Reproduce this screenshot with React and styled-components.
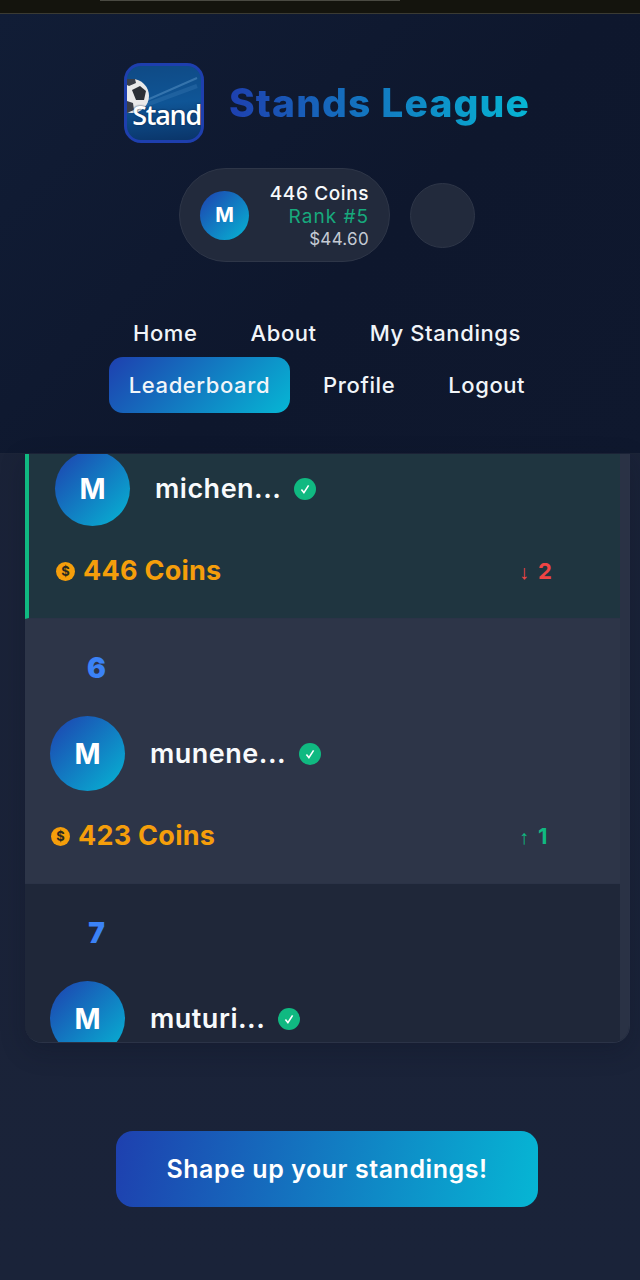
import React from 'react'
import styled, { createGlobalStyle } from 'styled-components'

const GlobalStyle = createGlobalStyle`
  html, body { margin: 0; padding: 0; background: #1a2238; overflow: hidden; }
  * { box-sizing: border-box; }
`

const Viewport = styled.div`
  width: 640px;
  height: 1280px;
  overflow: hidden;
  background: linear-gradient(180deg, #1a2237 0%, #1a2339 100%);
  font-family: Inter, "Open Sans", sans-serif;
  color: #fff;
`
// the page itself is a bit wider than the phone screen, so it gets cut on the right
const Page = styled.div`
  width: 654px;
`
const StatusBar = styled.div`
  height: 14px;
  background: #14140d;
  border-bottom: 1px solid #3b3b33;
  padding-left: 100px;
`
const StatusLine = styled.div`
  width: 300px;
  height: 1px;
  background: #4a4a42;
`
const Header = styled.header`
  height: 440px;
  padding-top: 49px;
  display: flex;
  flex-direction: column;
  align-items: center;
  background: linear-gradient(135deg, #111d36 0%, #0e172d 55%, #0f182e 100%);
  border-bottom: 1px solid #1c2438;
`
const Brand = styled.div`
  display: flex;
  align-items: center;
  gap: 25px;
`
const LogoBox = styled.div`
  position: relative;
  width: 80px;
  height: 80px;
  border: 3px solid #1e3fae;
  border-radius: 17px;
  overflow: hidden;
  background: linear-gradient(175deg, #0f4a85 0%, #0f5596 50%, #0a3468 100%);
`
const LogoArt = styled.svg`
  position: absolute;
  left: 0;
  top: 0;
`
const LogoText = styled.span`
  position: absolute;
  right: 0;
  bottom: 10px;
  font-family: "Open Sans", sans-serif;
  font-weight: 600;
  font-size: 27px;
  line-height: 30px;
  letter-spacing: -1.3px;
  text-shadow: 0 0 2px #0a2347;
`
const Title = styled.h1`
  margin: 0;
  font-size: 39px;
  line-height: 46px;
  font-weight: 800;
  letter-spacing: 1.15px;
  white-space: nowrap;
  background: linear-gradient(90deg, #1e40af 0%, #06b6d4 100%);
  -webkit-background-clip: text;
  background-clip: text;
  color: transparent;
`
const UserRow = styled.div`
  margin-top: 25px;
  display: flex;
  align-items: center;
  gap: 20px;
`
const Chip = styled.div`
  width: 211px;
  height: 94px;
  padding: 0 20px;
  display: flex;
  align-items: center;
  justify-content: space-between;
  background: #222a3c;
  border: 1px solid #2e3648;
  border-radius: 47px;
`
const Avatar = styled.div`
  width: ${p => p.$size}px;
  height: ${p => p.$size}px;
  flex: none;
  display: flex;
  align-items: center;
  justify-content: center;
  border-radius: 50%;
  background: linear-gradient(135deg, #1e40af 0%, #06b6d4 100%);
  font-size: ${p => p.$font}px;
  font-weight: 700;
  color: #fff;
`
const ChipText = styled.div`
  display: flex;
  flex-direction: column;
  align-items: flex-end;
`
const ChipLine = styled.span`
  font-size: ${p => p.$size}px;
  line-height: ${p => p.$height}px;
  font-weight: ${p => p.$weight};
  color: ${p => p.$color};
  letter-spacing: ${p => p.$spacing}px;
  white-space: nowrap;
`
const BellButton = styled.div`
  width: 65px;
  height: 65px;
  background: #222a3c;
  border: 1px solid #2e3648;
  border-radius: 50%;
`
const Nav = styled.nav`
  margin-top: 45px;
  display: flex;
  flex-direction: column;
  align-items: center;
`
const NavRow = styled.div`
  display: flex;
  gap: 13px;
  height: 52px;
  align-items: center;
`
const NavLink = styled.a`
  height: 56px;
  padding: 0 20px;
  display: flex;
  align-items: center;
  border-radius: 14px;
  font-size: 22px;
  font-weight: 500;
  letter-spacing: 0.6px;
  white-space: nowrap;
  color: #f1f5f9;
  background: ${p => (p.$active ? 'linear-gradient(135deg, #1e40af 0%, #06b6d4 100%)' : 'none')};
`
const Board = styled.section`
  margin: 0 24px 0 25px;
  height: 589px;
  display: flex;
  overflow: hidden;
  background: #1f2739;
  border: 1px solid #2b3347;
  border-top: 0;
  border-left-width: 0;
  border-radius: 0 0 17px 17px;
  box-shadow: 0 8px 24px rgba(10, 15, 30, 0.25);
`
const Scroller = styled.div`
  flex: 1;
  min-width: 0;
  overflow: hidden;
`
// list is scrolled, so the first row starts above the top of the board
const RowList = styled.div`
  margin-top: -100px;
`
const ScrollTrack = styled.div`
  width: 9px;
  flex: none;
  background: #2a3245;
`
const Row = styled.article`
  height: 265px;
  padding: 25px 45px 0 ${p => (p.$me ? 26 : 25)}px;
  display: flex;
  flex-direction: column;
  border-bottom: 1px solid #2b3347;
  border-left: ${p => (p.$me ? '4px solid #10b981' : '0')};
  background: ${p => p.$bg};
`
const Rank = styled.div`
  width: 93px;
  height: 48px;
  text-align: center;
  font-size: 28px;
  line-height: 48px;
  font-weight: 900;
  color: #3b82f6;
`
const Player = styled.div`
  margin-top: 24px;
  display: flex;
  align-items: center;
`
const Name = styled.span`
  margin-left: 25px;
  font-size: 27px;
  font-weight: 600;
  letter-spacing: 0.5px;
  white-space: nowrap;
  color: #f8fafc;
`
const Verified = styled.span`
  margin-left: 13px;
  width: 22px;
  height: 22px;
  display: flex;
  align-items: center;
  justify-content: center;
  border-radius: 50%;
  background: #10b981;
`
const Stats = styled.div`
  margin-top: 27px;
  display: flex;
  align-items: center;
  justify-content: space-between;
`
const Coins = styled.div`
  margin-left: 1px;
  display: flex;
  align-items: center;
  gap: 8px;
  font-size: 27px;
  line-height: 36px;
  font-weight: 700;
  letter-spacing: 0.25px;
  color: #f59e0b;
`
const CoinIcon = styled.span`
  width: 19px;
  height: 19px;
  display: flex;
  align-items: center;
  justify-content: center;
  border-radius: 50%;
  background: #f59e0b;
  color: #2a2a20;
  font-size: 13px;
  line-height: 1;
  font-weight: 700;
  letter-spacing: 0;
`
const Change = styled.div`
  width: 56px;
  font-size: 22px;
  font-weight: 700;
  color: ${p => (p.$up ? '#10b981' : '#ef4444')};
  white-space: nowrap;
`
const Arrow = styled.span`
  font-family: "Liberation Sans", sans-serif;
  font-weight: 400;
  font-size: 20px;
  margin-right: 9px;
`
const Footer = styled.div`
  margin-top: 88px;
  display: flex;
  justify-content: center;
`
const CtaButton = styled.button`
  width: 422px;
  height: 76px;
  border: 0;
  border-radius: 17px;
  background: linear-gradient(100deg, #1e40af 0%, #06b6d4 100%);
  color: #fff;
  font-family: inherit;
  font-size: 25px;
  font-weight: 600;
  letter-spacing: 0.55px;
`

const LogoDrawing = () => (
  <LogoArt width="74" height="74" viewBox="0 0 74 74">
    <path d="M20 34L70 12" stroke="#6fa9d8" strokeWidth="2" opacity="0.4" />
    <path d="M16 40L70 20" stroke="#4d8cc4" strokeWidth="4" opacity="0.25" />
    <circle cx="5" cy="30" r="17" fill="#e9e9e9" />
    <path d="M5 24l8-4 6 5-2 9-8 0z" fill="#2b2f36" />
    <path d="M0 13l8 0 1 4-7 3-2-1zM0 35l6 2 1 7-7 3z" fill="#3b3f48" />
  </LogoArt>
)

const Check = () => (
  <svg width="12" height="12" viewBox="0 0 12 12" fill="none" stroke="#fff" strokeWidth="1.6">
    <path d="M2.4 6.6l2.5 3L9.6 2.4" />
  </svg>
)

const rows = [
  { rank: 5, name: 'michen...', coins: 446, change: 2, up: false, me: true, bg: '#1f3540' },
  { rank: 6, name: 'munene...', coins: 423, change: 1, up: true, bg: '#2d3548' },
  { rank: 7, name: 'muturi...', coins: 410, change: 1, up: true, bg: '#1f2739' },
]

const App = () => (
  <Viewport>
    <GlobalStyle />
    <Page>
      <StatusBar><StatusLine /></StatusBar>
      <Header>
        <Brand>
          <LogoBox>
            <LogoDrawing />
            <LogoText>Stand</LogoText>
          </LogoBox>
          <Title>Stands League</Title>
        </Brand>
        <UserRow>
          <Chip>
            <Avatar $size={49} $font={20}>M</Avatar>
            <ChipText>
              <ChipLine $size={19} $height={23} $weight={500} $spacing={0.6} $color="#f8fafc">446 Coins</ChipLine>
              <ChipLine $size={19} $height={24} $weight={400} $spacing={1} $color="#17a97c">Rank #5</ChipLine>
              <ChipLine $size={17} $height={20} $weight={400} $spacing={0.3} $color="#c5cad4">$44.60</ChipLine>
            </ChipText>
          </Chip>
          <BellButton />
        </UserRow>
        <Nav>
          <NavRow>
            <NavLink>Home</NavLink>
            <NavLink>About</NavLink>
            <NavLink>My Standings</NavLink>
          </NavRow>
          <NavRow>
            <NavLink $active>Leaderboard</NavLink>
            <NavLink>Profile</NavLink>
            <NavLink>Logout</NavLink>
          </NavRow>
        </Nav>
      </Header>
      <Board>
        <Scroller>
          <RowList>
            {rows.map(r => (
              <Row key={r.rank} $me={r.me} $bg={r.bg}>
                <Rank>{r.rank}</Rank>
                <Player>
                  <Avatar $size={75} $font={28}>M</Avatar>
                  <Name>{r.name}</Name>
                  <Verified><Check /></Verified>
                </Player>
                <Stats>
                  <Coins><CoinIcon>$</CoinIcon>{r.coins} Coins</Coins>
                  <Change $up={r.up}><Arrow>{r.up ? '↑' : '↓'}</Arrow>{r.change}</Change>
                </Stats>
              </Row>
            ))}
          </RowList>
        </Scroller>
        <ScrollTrack />
      </Board>
      <Footer>
        <CtaButton>Shape up your standings!</CtaButton>
      </Footer>
    </Page>
  </Viewport>
)

export default App
